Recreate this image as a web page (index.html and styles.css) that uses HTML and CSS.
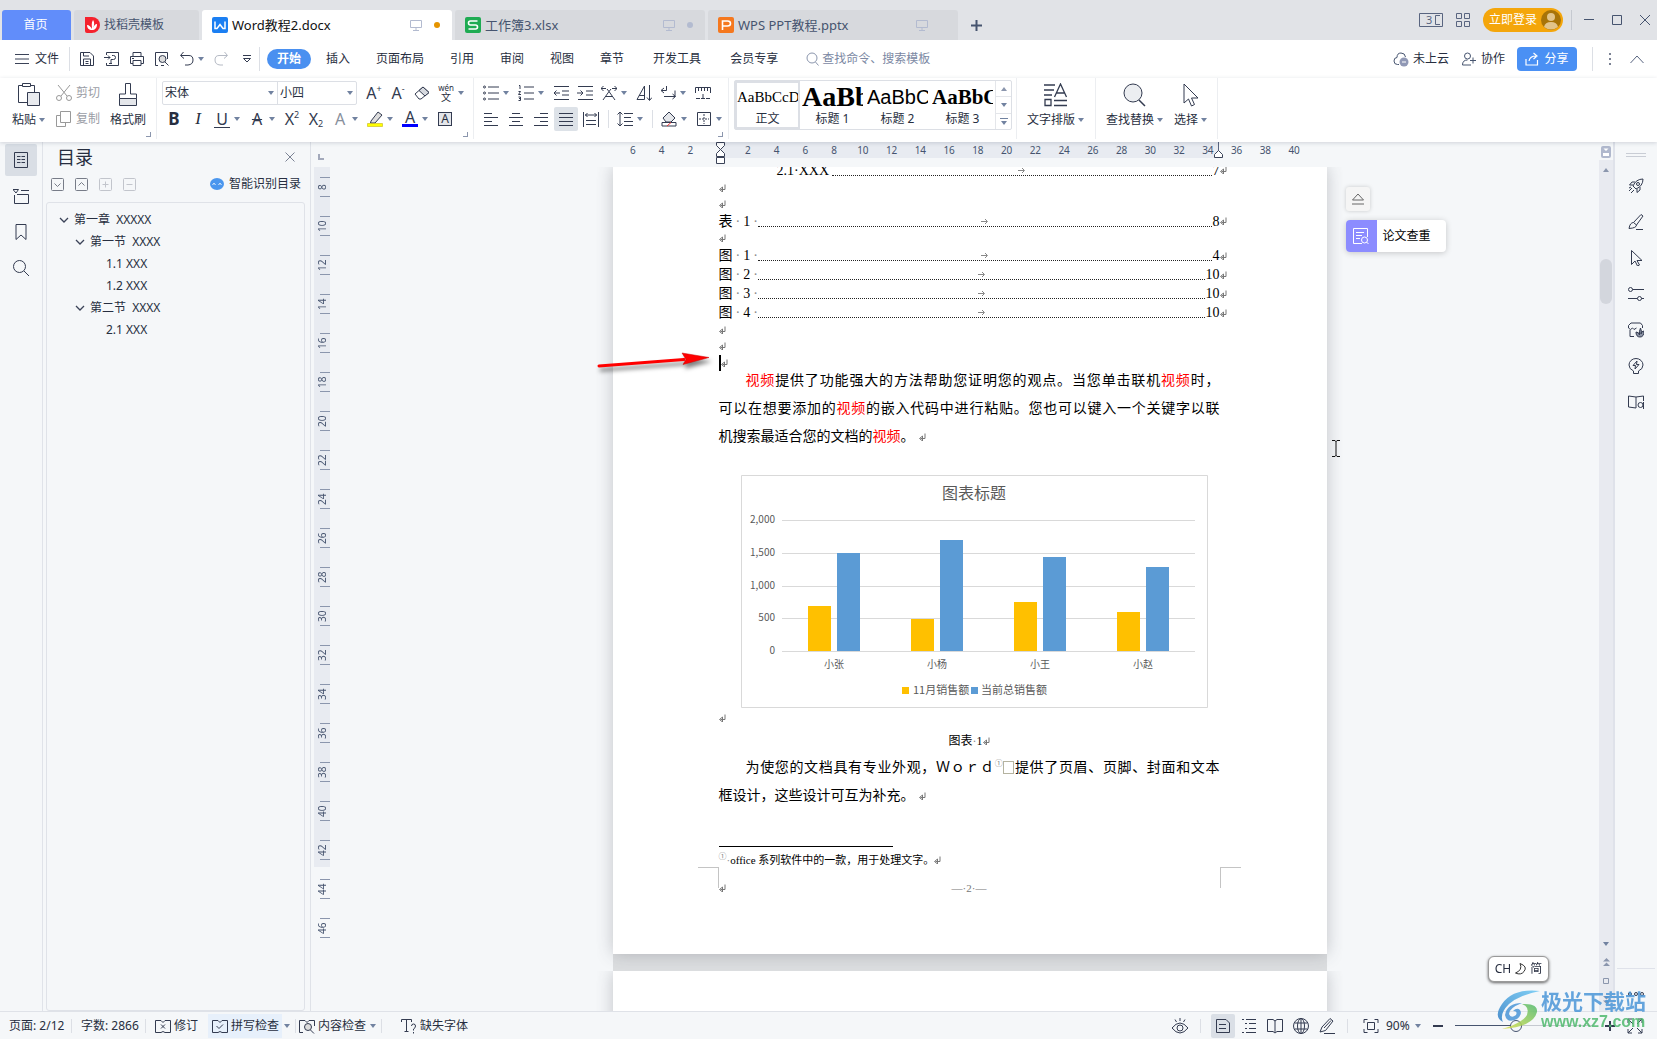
FILE: index.html
```html
<!DOCTYPE html>
<html lang="zh-CN">
<head>
<meta charset="utf-8">
<meta name="viewport" content="width=device-width, initial-scale=1">
<title>Word教程2.docx</title>
<link rel="stylesheet" href="styles.css">
</head>
<body>
<svg class="sprite" aria-hidden="true">
  <symbol id="ret" viewBox="0 0 7 8"><path d="M6 .5v5H1.500M3.500 3v5L.5 5.500z" fill="none" stroke="#777"/></symbol>
  <symbol id="tabarrow" viewBox="0 0 7 7"><path d="M0 3.500h6M4 1l2.500 2.500L4 6" fill="none" stroke="#888"/></symbol>
  <symbol id="screen" viewBox="0 0 12 12"><path d="M.5 1.500h11v7H.5zM6 8.500v3M3 11.500h6" fill="none" stroke="#b3bbd0"/></symbol>
  <symbol id="chev-down" viewBox="0 0 10 6"><path d="M1 1l4 4 4-4" fill="none" stroke="#3b4358" stroke-width="1.300"/></symbol>
</svg>

<header class="titlebar">
  <nav class="doc-tabs">
    <button class="doc-tab home">首页</button>
    <button class="doc-tab template">
      <svg class="i16" viewBox="0 0 16 16"><path d="M1 0h7a8 8 0 0 1 0 16H3a2 2 0 0 1-2-2z" fill="#f5222d"/><path d="M8 13c-3 0-5-2-5-5 2 0 4 2 5 4 0-3-1-6 1-9 2 3 1 6 0 8 1-2 2-4 4-4 0 4-2 6-5 6z" fill="#fff"/></svg>
      <span>找稻壳模板</span>
    </button>
    <button class="doc-tab active">
      <svg class="i16" viewBox="0 0 16 16"><rect width="16" height="16" rx="2" fill="#1b7ff2"/><path d="M3 4.500v7h2l3-4 3 4h2v-7" fill="none" stroke="#fff" stroke-width="1.500"/></svg>
      <span>Word教程2.docx</span>
      <svg class="i12 push"><use href="#screen"/></svg><i class="dot"></i>
    </button>
    <button class="doc-tab">
      <svg class="i16" viewBox="0 0 16 16"><rect width="16" height="16" rx="2" fill="#1eab52"/><path d="M12.500 4h-7Q3.500 4 3.500 6t2 2h5q2 0 2 2t-2 2h-7" fill="none" stroke="#fff" stroke-width="1.600"/></svg>
      <span>工作簿3.xlsx</span>
      <svg class="i12 push"><use href="#screen"/></svg><i class="dot pale"></i>
    </button>
    <button class="doc-tab">
      <svg class="i16" viewBox="0 0 16 16"><rect width="16" height="16" rx="2" fill="#f5781e"/><path d="M4.500 13V4h5q3 0 3 2.500T9.500 9h-5" fill="none" stroke="#fff" stroke-width="1.600"/></svg>
      <span>WPS PPT教程.pptx</span>
      <svg class="i12 push"><use href="#screen"/></svg><i class="dot none"></i>
    </button>
    <button class="new-tab" aria-label="新建"><svg width="11" height="11" viewBox="0 0 11 11"><path d="M5.500 0v11M0 5.500h11" stroke="#46546f" stroke-width="2"/></svg></button>
  </nav>
  <div class="window-tools">
    <svg width="24" height="14" viewBox="0 0 24 14" fill="none" stroke="#596580"><path d="M.5.5h23v13H.5zM21 2.500h-4.500v9H21"/><text x="7" y="11" font-size="11" fill="#596580" stroke="none">3</text></svg>
    <svg width="14" height="14" viewBox="0 0 14 14"><path d="M.5.5h5v5h-5zM8.500.5h5v5h-5zM.5 8.500h5v5h-5zM8.500 8.500h5v5h-5z" fill="none" stroke="#596580"/></svg>
    <button class="login">立即登录<svg width="20" height="20" viewBox="0 0 20 20"><circle cx="10" cy="10" r="10" fill="#a87408"/><circle cx="10" cy="7" r="4" fill="#e2c48a"/><path d="M3 17q1-5 7-5t7 5q-7 5-14 0z" fill="#e2c48a"/></svg></button>
    <i class="vsep"></i>
    <svg class="win" viewBox="0 0 12 12"><path d="M1 5.500h10" stroke="#46546f"/></svg>
    <svg class="win" viewBox="0 0 12 12"><path d="M1.500 1.500h9v9h-9z" fill="none" stroke="#46546f"/></svg>
    <svg class="win" viewBox="0 0 12 12"><path d="M1 1l10 10M11 1L1 11" stroke="#46546f"/></svg>
  </div>
</header>

<div class="menubar">
  <button class="file"><svg width="14" height="10" viewBox="0 0 14 10"><path d="M0 .5h14M0 5h14M0 9.500h14" stroke="#3b4358"/></svg>文件</button>
  <i class="vsep"></i>
  <div class="quick">
    <svg class="i16" viewBox="0 0 16 16"><path d="M1.500 1.500h9.500l3.500 3.500v9.500h-13zM4.500 14.500V8h7v6.500M4.500 1.500V5H10M6.500 10.500h3M6.500 12.500h3"/></svg>
    <svg class="i16" viewBox="0 0 16 16"><path d="M2.500 4V1.500h12v13h-12V12M0 6.500h6M4 4.500l2 2-2 2M7 12V8.500h2.500q2 0 2-2t-2-2H8M5 12.500h3"/></svg>
    <svg class="i16" viewBox="0 0 16 16"><path d="M4 5V1.500h8V5M4 12.500H1.500v-7h13v7H12M4 9.500h8v5H4zM3 7.500h2"/></svg>
    <svg class="i16" viewBox="0 0 16 16"><path d="M4 14.500H1.500v-13h12V8M7 14.500h3"/><circle cx="8.500" cy="8" r="3.500" fill="#ddd"/><path d="M11 11l3.500 3.500"/></svg>
    <span class="undo"><svg class="i16" viewBox="0 0 16 16"><path d="M4.500 1L1.500 4.500l3.500 3M2 4.500h8q4 0 4 4.500t-5 5H6"/></svg><i class="caret"></i></span>
    <svg class="i16 faded" viewBox="0 0 16 16"><path d="M11.500 1l3 3.500L11 7.500M14 4.500H6q-4 0-4 4.500t5 5h3"/></svg>
    <svg width="8" height="8" viewBox="0 0 8 8"><path d="M0 .5h8M.5 3.500h7L4 7z"/></svg>
  </div>
  <i class="vsep"></i>
  <nav class="menu">
    <button class="current">开始</button><button>插入</button><button>页面布局</button><button>引用</button><button>审阅</button><button>视图</button><button>章节</button>
  </nav>
  <nav class="menu wide"><button>开发工具</button><button>会员专享</button></nav>
  <label class="search"><svg width="13" height="14" viewBox="0 0 13 14"><circle cx="6" cy="6" r="5" fill="none" stroke="#8b96ad"/><path d="M9.500 10l3 3.500" stroke="#8b96ad"/></svg><input type="text" placeholder="查找命令、搜索模板" aria-label="查找命令、搜索模板"></label>
  <div class="share-tools">
    <button class="plain"><svg class="i16" viewBox="0 0 16 16"><path d="M6 13.500H4.500Q1 13.500 1 10t3-3.500Q4 2 8 2q4 0 4.500 4" fill="none" stroke="#46546f"/><circle cx="11" cy="11" r="4.500" fill="#9098b5"/><path d="M9 11h4" stroke="#fff"/></svg>未上云</button>
    <button class="plain"><svg class="i16" viewBox="0 0 16 16"><circle cx="6.500" cy="5" r="3" fill="none" stroke="#46546f"/><path d="M10 14H1.500q0-5 5-5M9 9.500h6M12 6.500v6" fill="none" stroke="#46546f"/></svg>协作</button>
    <button class="share"><svg width="14" height="14" viewBox="0 0 14 14"><path d="M1 7v6h11.500V8M4 9q1-5 7-5M8.500 1L12 4 8.500 7" fill="none" stroke="#fff" stroke-width="1.200"/></svg>分享</button>
    <i class="vsep"></i>
    <svg class="more" width="3" height="13" viewBox="0 0 3 13"><path d="M0 0h2v2H0zM0 5h2v2H0zM0 10h2v2H0z" fill="#7b8294"/></svg>
    <svg width="14" height="9" viewBox="0 0 14 9"><path d="M.5 8L7 1l6.500 7" fill="none" stroke="#596580"/></svg>
  </div>
</div>

<section class="ribbon">
  <div class="group clipboard">
    <button class="big"><svg width="22" height="24" viewBox="0 0 22 24"><path d="M4 2.500H.5v17H9M12 2.500h4.500V9M4.500.5h8v3h-8z" fill="none" stroke="#333b50"/><path d="M9.500 9.500h12v13h-12z" fill="#e8eaee" stroke="#333b50"/></svg><span>粘贴<i class="caret"></i></span></button>
    <div class="stack">
      <button class="small"><svg class="i16" viewBox="0 0 16 16"><path d="M2 0l9 11M14 0L5 11" stroke="#999" fill="none"/><circle cx="3" cy="13" r="2.500" stroke="#999" fill="none"/><circle cx="13" cy="13" r="2.500" stroke="#999" fill="none"/></svg>剪切</button>
      <button class="small"><svg class="i16" viewBox="0 0 16 16"><path d="M4.500.5h10v11h-10zM4.500 4.500h-4v11h9v-4" fill="none" stroke="#999"/></svg>复制</button>
    </div>
    <button class="big painter"><svg width="20" height="24" viewBox="0 0 20 24"><path d="M7.500 11V.5h5V11h6v4.500H1.500V11z" fill="#fff" stroke="#333b50"/><path d="M1.500 15.500h17v7h-17z" fill="#e4e6ea" stroke="#333b50"/></svg><span>格式刷</span></button>
    <i class="launcher"></i>
  </div>
  <div class="group font-group">
    <div class="row first">
      <div class="combos">
        <span class="combo family"><select aria-label="字体"><option>宋体</option></select><i class="caret"></i></span>
        <span class="combo size"><select aria-label="字号"><option>小四</option></select><i class="caret"></i></span>
      </div>
      <button class="tool letter">A<sup>+</sup></button>
      <button class="tool letter">A<sup>-</sup></button>
      <button class="tool" aria-label="清除格式"><svg class="i16" viewBox="0 0 16 16"><path d="M1 9l8-7 6 5.500-8 6.500H5z" fill="#fff" stroke="#333b50"/><path d="M5 5.500l6 5.500 4-3.500L9 2z" fill="#d6d9df" stroke="#333b50"/></svg></button>
      <button class="tool drop"><span class="pinyin"><small>wén</small><span>文</span></span><i class="caret"></i></button>
    </div>
    <div class="row">
      <button class="tool bold">B</button><button class="tool italic">I</button>
      <button class="tool drop"><span class="under">U</span><i class="caret"></i></button>
      <button class="tool drop"><span class="strike">A</span><i class="caret"></i></button>
      <button class="tool script">X<sup>2</sup></button><button class="tool script">X<sub>2</sub></button>
      <button class="tool drop"><span class="outline">A</span><i class="caret"></i></button>
      <button class="tool drop" aria-label="突出显示"><svg class="i16" viewBox="0 0 16 16"><path d="M4 10l7-9 4 3-7 8H3.500z" fill="#ddd" stroke="#333b50"/><path d="M.5 12.500h15v3H.5z" fill="#ff0" stroke="#bba800" stroke-width=".5"/></svg><i class="caret"></i></button>
      <button class="tool drop"><span class="colored">A</span><i class="caret"></i></button>
      <button class="tool"><span class="boxed">A</span></button>
    </div>
    <i class="launcher"></i>
  </div>
  <div class="group para-group">
    <div class="row first">
      <button class="tool drop" aria-label="项目符号"><svg class="i16" viewBox="0 0 16 16"><path d="M5 2h11M5 8h11M5 14h11"/><circle cx="1.500" cy="2" r="1"/><circle cx="1.500" cy="8" r="1"/><circle cx="1.500" cy="14" r="1"/></svg><i class="caret"></i></button>
      <button class="tool drop" aria-label="编号"><svg class="i16" viewBox="0 0 16 16"><path d="M6 2h10M6 8h10M6 14h10M1 .5h1V4M.5 6.500h2L.5 9.500h2.500M.5 12h2v3.500h-2M1 13.500h1"/></svg><i class="caret"></i></button>
      <button class="tool" aria-label="减少缩进"><svg class="i16" viewBox="0 0 16 16"><path d="M1 1.500h15M9 6h7M9 10h7M1 14.500h15M7 8H1M3.500 5.500L1 8l2.500 2.500"/></svg></button>
      <button class="tool" aria-label="增加缩进"><svg class="i16" viewBox="0 0 16 16"><path d="M1 1.500h15M9 6h7M9 10h7M1 14.500h15M0 8h6M3.500 5.500L6 8l-2.500 2.500"/></svg></button>
      <button class="tool drop" aria-label="中文版式"><svg class="i16" viewBox="0 0 16 16"><path d="M0 3.500h5M11 3.500h5M2.500 1L0 3.500 2.500 6M13.500 1L16 3.500 13.500 6M2 15L8 6.500 14 15M4.500 11.500h7M6 4l2 2.500L10 4"/></svg><i class="caret"></i></button>
      <button class="tool" aria-label="排序"><svg class="i16" viewBox="0 0 16 16"><path d="M13.500 0v15M11 12.500l2.500 3 2.500-3M1 14.500L8.500 1v13.500zM3 10.500h5"/></svg></button>
      <button class="tool drop" aria-label="显示段落标记"><svg class="i16" viewBox="0 0 16 16"><path d="M6.500 1v4.500h-5M4 3L1 5.500 4 8M15 5.500v6H4M12.500 9l3 2.500-3 2.500"/></svg><i class="caret"></i></button>
      <button class="tool" aria-label="制表位"><svg class="i16" viewBox="0 0 16 16"><path d="M.5 8V2.500h15V8M3.500 3v3M6.500 3v3M9.500 3v3M12.500 3v3M1 13.500h4M11 13.500h4M8 9v5M6 13.500h4"/></svg></button>
    </div>
    <div class="row gap">
      <button class="tool" aria-label="左对齐"><svg class="i16" viewBox="0 0 16 16"><path d="M1 2.500h8M1 6.500h14M1 10.500h8M1 14.500h14"/></svg></button>
      <button class="tool" aria-label="居中"><svg class="i16" viewBox="0 0 16 16"><path d="M4 2.500h8M1 6.500h14M4 10.500h8M1 14.500h14"/></svg></button>
      <button class="tool" aria-label="右对齐"><svg class="i16" viewBox="0 0 16 16"><path d="M7 2.500h8M1 6.500h14M7 10.500h8M1 14.500h14"/></svg></button>
      <button class="tool on" aria-label="两端对齐"><svg class="i16" viewBox="0 0 16 16"><path d="M1 2.500h14M1 6.500h14M1 10.500h14M1 14.500h14"/></svg></button>
      <button class="tool" aria-label="分散对齐"><svg class="i16" viewBox="0 0 16 16"><path d="M.5 1v15M15.500 1v15M2 4h12M4.500 2L2.500 4l2 2M11.500 2l2 2-2 2M3 9.500h10M3 13.500h10"/></svg></button>
      <i class="vsep"></i>
      <button class="tool drop" aria-label="行距"><svg class="i16" viewBox="0 0 16 16"><path d="M3 1v14M.5 3.500L3 1l2.500 2.500M.5 12.500L3 15l2.500-2.500M7 2.500h9M7 6.500h7M7 10.500h9M7 14.500h9"/></svg><i class="caret"></i></button>
      <i class="vsep"></i>
      <button class="tool drop" aria-label="底纹"><svg class="i16" viewBox="0 0 16 16"><path d="M2 7l6-6 6 6-4 4H5z" fill="#e4e6ea"/><path d="M1 11.500h14v3.500H1z"/><path d="M6 15l4-3.500" stroke="#e33"/></svg><i class="caret"></i></button>
      <button class="tool drop" aria-label="边框"><svg class="i16" viewBox="0 0 16 16"><path d="M1.500 1.500h13v13h-13z"/><path d="M8 3v10M3 8h10" stroke-dasharray="2 1"/></svg><i class="caret"></i></button>
    </div>
    <i class="launcher"></i>
  </div>
  <div class="group styles-group">
    <div class="gallery">
      <button class="style chosen"><span class="sample normal">AaBbCcDd</span><span>正文</span></button>
      <button class="style"><span class="sample h1">AaBb</span><span>标题 1</span></button>
      <button class="style"><span class="sample h2">AaBbC</span><span>标题 2</span></button>
      <button class="style"><span class="sample h3">AaBbC</span><span>标题 3</span></button>
      <div class="spin"><button aria-label="上一行"><i class="caret up"></i></button><button aria-label="下一行"><i class="caret"></i></button><button aria-label="更多样式"><svg width="8" height="8" viewBox="0 0 8 8"><path d="M0 1.500h8" stroke="#7182a0"/><path d="M1 4h6L4 8z" fill="#7182a0"/></svg></button></div>
    </div>
  </div>
  <div class="group typeset">
    <button class="big"><svg width="24" height="24" viewBox="0 0 24 24" fill="none" stroke="#333b50" stroke-width="1.300"><path d="M0 2h11M0 7h10M0 12h8M10.500 14L16.500 1l6 13M12.500 10h8M1 16.500h6v6H1zM10 17.500h13M10 22.500h13"/></svg><span>文字排版<i class="caret"></i></span></button>
  </div>
  <div class="group edit">
    <button class="big"><svg width="24" height="24" viewBox="0 0 24 24"><circle cx="10" cy="10" r="9" fill="#eceef1" stroke="#333b50"/><path d="M16 17l6 6" stroke="#333b50" stroke-width="1.500"/></svg><span>查找替换<i class="caret"></i></span></button>
    <button class="big"><svg width="24" height="24" viewBox="0 0 24 24"><path d="M5 1v19l4.500-4 3 7 3-1.500-3-6.500h6.500z" fill="#fff" stroke="#333b50"/></svg><span>选择<i class="caret"></i></span></button>
  </div>
</section>

<main class="workspace">
  <nav class="rail left">
    <button class="on" aria-label="目录"><svg class="i16" viewBox="0 0 16 16"><path d="M1.500.5h13v15h-13zM4 4.500h3.500M8.500 4.500H12M4 7.500h3.500M8.500 7.500H12M4 10.500h3.500M8.500 10.500H12"/></svg></button>
    <button aria-label="章节"><svg class="i16" viewBox="0 0 16 16"><path d="M0 1.500h5.500L3 5zM8 2.500h8M1.500 7v8.500h14v-9H4"/></svg></button>
    <button aria-label="书签"><svg class="i16" viewBox="0 0 16 16"><path d="M3 .5h10v15L8 11l-5 4.500z"/></svg></button>
    <button aria-label="查找"><svg class="i16" viewBox="0 0 16 16"><circle cx="6.500" cy="6.500" r="6"/><path d="M11 11l5 5"/></svg></button>
  </nav>
  <aside class="outline-panel">
    <div class="panel-head"><h2>目录</h2><button aria-label="关闭"><svg width="10" height="10" viewBox="0 0 10 10"><path d="M.5.5l9 9M9.500.5l-9 9" stroke="#7b8294"/></svg></button></div>
    <div class="panel-tools">
      <svg class="sq" viewBox="0 0 13 13"><rect x=".5" y=".5" width="12" height="12" rx="1"/><path d="M3.500 5.500l3 3 3-3"/></svg>
      <svg class="sq" viewBox="0 0 13 13"><rect x=".5" y=".5" width="12" height="12" rx="1"/><path d="M3.500 7.500l3-3 3 3"/></svg>
      <svg class="sq off" viewBox="0 0 13 13"><rect x=".5" y=".5" width="12" height="12" rx="1"/><path d="M3.500 6.500h6M6.500 3.500v6"/></svg>
      <svg class="sq off" viewBox="0 0 13 13"><rect x=".5" y=".5" width="12" height="12" rx="1"/><path d="M3.500 6.500h6"/></svg>
      <button class="smart"><svg width="14" height="12" viewBox="0 0 14 12"><ellipse cx="7" cy="6" rx="7" ry="6" fill="#4a96ee"/><path d="M2.500 6.500q1.500-2 3 0M8.500 6.500q1.500-2 3 0" fill="none" stroke="#fff"/></svg>智能识别目录</button>
    </div>
    <ul class="tree">
      <li class="l1"><svg class="tw"><use href="#chev-down"/></svg>第一章&nbsp; XXXXX</li>
      <li class="l2"><svg class="tw"><use href="#chev-down"/></svg>第一节&nbsp; XXXX</li>
      <li class="l3">1.1 XXX</li>
      <li class="l3">1.2 XXX</li>
      <li class="l2"><svg class="tw"><use href="#chev-down"/></svg>第二节&nbsp; XXXX</li>
      <li class="l3">2.1 XXX</li>
    </ul>
  </aside>

  <section class="editor">
    <div class="hruler-strip">
      <div class="corner"><svg width="6" height="6" viewBox="0 0 6 6"><path d="M1 0v5h5" fill="none" stroke="#a3a9bb" stroke-width="2"/></svg></div>
      <div class="hruler">
        <div class="hnums"><span>6</span><span>4</span><span>2</span><span></span><span>2</span><span>4</span><span>6</span><span>8</span><span>10</span><span>12</span><span>14</span><span>16</span><span>18</span><span>20</span><span>22</span><span>24</span><span>26</span><span>28</span><span>30</span><span>32</span><span>34</span><span>36</span><span>38</span><span>40</span></div>
        <svg class="indent-left" width="9" height="22" viewBox="0 0 9 22"><path d="M.5.500h8v3l-4 4-4-4zM.5 14.500v-3l4-4 4 4v3zM.5 15.500h8v6h-8z" fill="#fff" stroke="#3b4358"/></svg>
        <svg class="indent-right" width="9" height="16" viewBox="0 0 9 16"><path d="M4.500 0v9" stroke="#596580"/><path d="M.5 15.500v-3l4-4 4 4v3z" fill="#fff" stroke="#3b4358"/></svg>
      </div>
    </div>
    <div class="canvas">
      <div class="vcol"><div class="vruler"><span>8</span><span>10</span><span>12</span><span>14</span><span>16</span><span>18</span><span>20</span><span>22</span><span>24</span><span>26</span><span>28</span><span>30</span><span>32</span><span>34</span><span>36</span><span>38</span><span>40</span><span>42</span><span>44</span><span>46</span></div></div>
      <div class="pages">
        <article class="page">
          <div class="toc sub"><span class="lab">2.1·XXX</span><i class="leader"><svg><use href="#tabarrow"/></svg></i><b>7</b><svg class="ret"><use href="#ret"/></svg></div>
          <div class="blank"><svg class="ret"><use href="#ret"/></svg></div>
          <div class="blank"><svg class="ret"><use href="#ret"/></svg></div>
          <div class="toc tbl"><span class="lab">表<i>·</i>1<i>·</i></span><i class="leader"><svg><use href="#tabarrow"/></svg></i><b>8</b><svg class="ret"><use href="#ret"/></svg></div>
          <div class="blank"><svg class="ret"><use href="#ret"/></svg></div>
          <div class="toc"><span class="lab">图<i>·</i>1<i>·</i></span><i class="leader"><svg><use href="#tabarrow"/></svg></i><b>4</b><svg class="ret"><use href="#ret"/></svg></div>
          <div class="toc"><span class="lab">图<i>·</i>2<i>·</i></span><i class="leader"><svg><use href="#tabarrow"/></svg></i><b>10</b><svg class="ret"><use href="#ret"/></svg></div>
          <div class="toc"><span class="lab">图<i>·</i>3<i>·</i></span><i class="leader"><svg><use href="#tabarrow"/></svg></i><b>10</b><svg class="ret"><use href="#ret"/></svg></div>
          <div class="toc"><span class="lab">图<i>·</i>4<i>·</i></span><i class="leader"><svg><use href="#tabarrow"/></svg></i><b>10</b><svg class="ret"><use href="#ret"/></svg></div>
          <div class="blank"><svg class="ret"><use href="#ret"/></svg></div>
          <div class="blank"><svg class="ret"><use href="#ret"/></svg></div>
          <div class="blank caret-line"><svg class="ret"><use href="#ret"/></svg></div>
          <p class="text"><span class="line indent"><em>视频</em>提供了功能强大的方法帮助您证明您的观点。当您单击联机<em>视频</em>时，</span><span class="line">可以在想要添加的<em>视频</em>的嵌入代码中进行粘贴。您也可以键入一个关键字以联</span><span class="line last">机搜索最适合您的文档的<em>视频</em>。<svg class="ret"><use href="#ret"/></svg></span></p>
          <svg class="chart" viewBox="0 0 467 233" role="img" aria-label="图表标题">
            <path class="frame" d="M.5.5h466v232H.5z"/>
            <text class="title" x="233" y="24">图表标题</text>
            <path class="grid" d="M41 45.500h413M41 78.500h413M41 111.500h413M41 143.500h413M41 176.500h413"/>
            <g class="axis"><text x="34" y="48">2,000</text><text x="34" y="81">1,500</text><text x="34" y="114">1,000</text><text x="34" y="146">500</text><text x="34" y="179">0</text></g>
            <g class="gold"><path d="M67 131h23v45H67zM170 144h23v32h-23zM273 127h23v49h-23zM376 137h23v39h-23zM161 212h7v7h-7z"/></g>
            <g class="blue"><path d="M96 78h23v98H96zM199 65h23v111h-23zM302 82h23v94h-23zM405 92h23v84h-23zM230 212h7v7h-7z"/></g>
            <g class="cats"><text x="93" y="193">小张</text><text x="196" y="193">小杨</text><text x="299" y="193">小王</text><text x="402" y="193">小赵</text></g>
            <g class="legend"><text x="172" y="219">11月销售额</text><text x="240" y="219">当前总销售额</text></g>
          </svg>
          <div class="blank tall"><svg class="ret"><use href="#ret"/></svg></div>
          <div class="caption">图表<i>·</i>1<svg class="ret"><use href="#ret"/></svg></div>
          <p class="text"><span class="line indent">为使您的文档具有专业外观，Ｗｏｒｄ<sup>①</sup><i class="box"></i>提供了页眉、页脚、封面和文本</span><span class="line last">框设计，这些设计可互为补充。<svg class="ret"><use href="#ret"/></svg></span></p>
          <footer class="footnote"><sup>①</sup><i>·</i>office 系列软件中的一款，用于处理文字。<svg class="ret"><use href="#ret"/></svg></footer>
          <div class="page-foot"><i class="mark ml"></i><svg class="ret"><use href="#ret"/></svg><span>—·2·—</span><i class="mark mr"></i></div>
        </article>
        <article class="page next"></article>
        <svg class="red-arrow" width="118" height="24" viewBox="0 0 118 24"><path d="M3 15L88 8.500" stroke="#f00" stroke-width="3" stroke-linecap="round"/><path d="M86 2l27 4.500-26 7 3-5z" fill="#f00" stroke="#c00" stroke-width=".5"/></svg>
        <div class="side-card">
          <button class="eject" aria-label="收起"><svg width="12" height="12" viewBox="0 0 12 12"><path d="M.5 7L6 1l5.500 6zM0 11h12" fill="none" stroke="#666"/></svg></button>
          <button class="check"><span class="badge"><svg class="i16" viewBox="0 0 16 16"><path d="M14.500 9V.5H.5v15H9M3 4.500h8M3 7.500h6M3 10.500h4M13.500 14l2 2" fill="none" stroke="#fff"/><circle cx="11.500" cy="12" r="3" fill="none" stroke="#fff"/></svg></span><span>论文查重</span></button>
        </div>
        <svg class="ibeam" width="8" height="17" viewBox="0 0 8 17"><path d="M0 .5h3l1 1 1-1h3M4 1v15M0 16.500h3l1-1 1 1h3" fill="none" stroke="#111"/></svg>
      </div>
    </div>
  </section>

  <div class="scrollbar">
    <svg class="ruler-toggle" width="10" height="12" viewBox="0 0 10 12"><rect width="10" height="12" rx="2" fill="#b0b8cd"/><path d="M2.500 2.500h5L5 5zM2 7h6v3H2z" fill="#fff"/></svg>
    <div class="track"><i class="caret up"></i><i class="thumb"></i>
      <div class="steps"><i class="caret"></i><svg width="7" height="8" viewBox="0 0 7 8"><path d="M3.500 0L7 3.500H0zM3.500 4.500L7 8H0z" fill="#8b96ad"/></svg><svg width="6" height="6" viewBox="0 0 6 6"><path d="M.5.5h5v5h-5z" fill="none" stroke="#8b96ad"/></svg><svg width="7" height="8" viewBox="0 0 7 8"><path d="M0 0h7L3.500 3.500zM0 4.500h7L3.500 8z" fill="#8b96ad"/></svg></div>
    </div>
  </div>

  <nav class="rail right">
    <i class="grip"></i>
    <button aria-label="助手"><svg class="i16" viewBox="0 0 16 16"><path d="M5 8q3-7 10-7 0 7-7 10zM5 7H1.500L4 4h3M9 11v3.500L12 12V9M1 10l2-1M1 13l3-3M3 15l3-3"/><circle cx="10" cy="6" r="1.500"/></svg></button>
    <button aria-label="样式"><svg class="i16" viewBox="0 0 16 16"><path d="M5.500 8.500L13 .5l2 1.500-6.500 9M5.500 8.500l3 2.500q0 3-7.500 3.500 1-6 4.500-6zM8 15.500h7"/></svg></button>
    <button aria-label="选择"><svg class="i16" viewBox="0 0 16 16"><path d="M3.500.5v14L7 11l2.500 5 2-1L9 10.500h5z"/></svg></button>
    <button aria-label="属性"><svg class="i16" viewBox="0 0 16 16"><path d="M4.500 3.500H16M0 12.500h9.500M13.500 12.500H16"/><circle cx="2.500" cy="3.500" r="2"/><circle cx="11.500" cy="12.500" r="2"/></svg></button>
    <button aria-label="素材"><svg class="i16" viewBox="0 0 16 16"><path d="M14.500 6V3.500L12.500 1H3L.5 3.500V6q2 3 4 0 1 3 4 0M2 8v6.500h4"/><path d="M8 10q3 0 3.500 3Q11 9 12.500 6q1.500 3 .5 6 .5-3 3-3 0 6-4 6t-4-5z" fill="#8b93a5"/></svg></button>
    <button aria-label="推荐"><svg class="i16" viewBox="0 0 16 16"><path d="M5.500 13Q1 11 1 7a7 6.500 0 0 1 14 0q0 4-4.500 6v2.500h-5zM9 3L5 7.500h2.500L7 11l4-4.500H8.500z"/></svg></button>
    <button aria-label="查阅"><svg class="i16" viewBox="0 0 16 16"><path d="M8 3v11M8 14L.5 13V2L8 3l7.500-1v5M15.500 8v7"/><circle cx="12.500" cy="11" r="2.500"/></svg></button>
    <i class="rail-line"></i>
    <button class="dots" aria-label="更多"><svg width="16" height="4" viewBox="0 0 16 4"><circle cx="2" cy="2" r="1.500"/><circle cx="8" cy="2" r="1.500"/><circle cx="14" cy="2" r="1.500"/></svg></button>
  </nav>
</main>

<footer class="status">
  <span class="page-no">页面: 2/12</span><i class="vsep"></i>
  <span class="words">字数: 2866</span><i class="vsep"></i>
  <button class="st"><svg class="i16" viewBox="0 0 16 16"><path d="M6 14.500H.5v-12H6M10 2.500h5.500v12H10M6 2.500l2 2 2-2M6 14.500l2-1 2 1M6 6.500l4 4M10 6.500l-4 4"/></svg>修订</button>
  <button class="st spell"><svg class="i16" viewBox="0 0 16 16"><path d="M6 14.500H.5v-12H6M10 2.500h5.500v12H10M6 2.500l2 2 2-2M6 14.500l2-1 2 1M4.500 8l2.500 2.500 4-4"/></svg>拼写检查</button><i class="caret"></i><i class="vsep"></i>
  <button class="st"><svg class="i16" viewBox="0 0 16 16"><path d="M4 14.500H.5v-12H6l2 2 2-2h5.500V8"/><circle cx="9" cy="9" r="3.500" fill="#ddd"/><path d="M11.500 12l3.500 3.500"/></svg>内容检查</button><i class="caret"></i><i class="vsep"></i>
  <button class="st missing"><svg class="i16" viewBox="0 0 16 16"><path d="M.5 4V1.500h10V4M5.500 1.500v12M3.500 13.500h4M10.500 8q0-2 2-2t2 2-2 3v1.500M12.500 14v1.500"/></svg>缺失字体</button>
  <div class="views">
    <button class="v" aria-label="护眼"><svg class="i16" viewBox="0 0 16 16"><path d="M0 10q4-5 8-5t8 5q-4 5-8 5t-8-5zM8 0v3M3 1.500L4.500 4M13 1.500L11.500 4"/><circle cx="8" cy="10" r="3"/></svg></button>
    <i class="vsep"></i>
    <button class="v on" aria-label="页面视图"><svg class="i16" viewBox="0 0 16 16"><path d="M1.500 1.500H11L14.500 5v9.500h-13zM4 6.500h7M4 10.500h7"/></svg></button>
    <button class="v" aria-label="大纲"><svg class="i16" viewBox="0 0 16 16"><path d="M1 1.500h2M5 1.500h10M4 5.500h2M8 5.500h7M4 10.500h2M8 10.500h7M1 14.500h2M5 14.500h10"/></svg></button>
    <button class="v" aria-label="阅读"><svg class="i16" viewBox="0 0 16 16"><path d="M8 3v11M.5 1.500H6l2 1.500 2-1.500h5.500v12H10L8 15l-2-1.500H.5z"/></svg></button>
    <button class="v" aria-label="Web版式"><svg class="i16" viewBox="0 0 16 16"><circle cx="8" cy="8" r="7.500"/><ellipse cx="8" cy="8" rx="3.500" ry="7.500"/><path d="M1.500 5h13M1.500 11h13M8 .5v15"/></svg></button>
    <button class="v" aria-label="写作"><svg class="i16" viewBox="0 0 16 16"><path d="M3 9l8-8.500 3 2.500-7.500 9.500L1 14zM5 10l7-7.500M5 15.500h11"/></svg></button>
    <i class="vsep"></i>
    <svg class="i16 fit" viewBox="0 0 16 16"><path d="M1 5V1.500h3.500M11.500 1.500H15V5M15 11v3.500h-3.500M4.500 14.500H1V11M4.500 4.500h7v7h-7z"/></svg>
    <span class="zoom">90%</span><i class="caret"></i>
    <button class="step" aria-label="缩小"><svg width="10" height="10" viewBox="0 0 10 10"><path d="M0 5h10" stroke-width="2"/></svg></button>
    <input class="slider" type="range" min="0" max="100" value="44" aria-label="显示比例">
    <button class="step" aria-label="放大"><svg width="10" height="10" viewBox="0 0 10 10"><path d="M0 5h10M5 0v10" stroke-width="2"/></svg></button>
    <svg class="i16 full" viewBox="0 0 16 16"><path d="M1 5V1h4M11 1h4v4M15 11v4h-4M5 15H1v-4M1 1l5 5M15 1l-5 5M15 15l-5-5M1 15l5-5"/></svg>
  </div>
</footer>

<div class="ime"><span>CH</span><svg width="11" height="12" viewBox="0 0 11 12"><path d="M5 .5q8 3 4 8-3 4-8.500 1.500Q8 7 5 .500z" fill="none" stroke="#333"/></svg><span>简</span></div>
<div class="watermark">
  <svg width="44" height="40" viewBox="0 0 44 40"><defs><linearGradient id="wb" x1="0" y1="1" x2="1" y2="0"><stop offset="0" stop-color="#2f7fc6"/><stop offset="1" stop-color="#6cc8f5"/></linearGradient><linearGradient id="wg" x1="1" y1="0" x2="0" y2="1"><stop offset="0" stop-color="#4fb96e"/><stop offset="1" stop-color="#dfe04a"/></linearGradient></defs><path d="M43 1Q16-2 5 14-4 27 6 32 2 24 12 14 22 5 43 1z" fill="url(#wb)"/><path d="M25 14q16-1 15 8Q36 37 5 39q20-6 25-14 3-8-5-11z" fill="url(#wg)"/><path d="M25 13q-15 0-17 12 2 9 12 4 6-5 3-9-3-3-7 1 5 0 3 4-5 4-7-1 0-6 13-11z" fill="#4b96d8"/></svg>
  <div><strong>极光下载站</strong><span>www.xz7.com</span></div>
</div>
</body>
</html>
```
FILE: styles.css
```css
* { box-sizing: border-box; }
html, body { height: 100%; }
body {
  margin: 0;
  display: flex;
  flex-direction: column;
  overflow: hidden;
  background: #f5f7f9;
  color: #272e40;
  font: 12px/16px "Noto Sans", "Noto Sans CJK SC", sans-serif;
}
button, input, select { font: inherit; color: inherit; }
button { border: 0; padding: 0; background: none; white-space: nowrap; }
svg { display: block; flex: none; }
i { font-style: normal; flex: none; }
.sprite { position: absolute; width: 0; height: 0; }
.i16 { width: 16px; height: 16px; }
.i12 { width: 12px; height: 12px; }
.push { margin-left: auto; }
.vsep { width: 1px; background: #dcdfe5; }
.caret { width: 0; height: 0; border: 3px solid transparent; border-top: 4px solid #7182a0; border-bottom: 0; }
.caret.up { border-top: 0; border-bottom: 4px solid #8b96ad; }

/* title bar */
.titlebar { display: flex; justify-content: space-between; height: 40px; background: #e1e3e7; flex: none; }
.doc-tabs { display: flex; align-items: flex-end; gap: 3px; padding-left: 2px; }
.doc-tab { display: flex; align-items: center; gap: 4px; width: 250px; height: 30px; padding: 0 12px 0 10px; background: #d7d9dd; border-radius: 3px 3px 0 0; color: #46546f; font-size: 13px; }
.doc-tab.home { width: 69px; justify-content: center; background: #618dfa; color: #fff; font-size: 12px; }
.doc-tab.template { width: 125px; font-size: 12px; }
.doc-tab.active { background: #fff; color: #111; }
.dot { width: 6px; height: 6px; margin-left: 8px; border-radius: 3px; background: #e59400; }
.dot.pale { background: #b3bbd0; }
.dot.none { background: none; }
.new-tab { width: 30px; height: 30px; display: flex; align-items: center; justify-content: center; }
.window-tools { display: flex; align-items: center; gap: 13px; padding-right: 6px; }
.window-tools .vsep { height: 20px; background: #c5c9d0; margin: 0 -5px; }
.login { display: flex; align-items: center; gap: 4px; height: 24px; padding: 0 2px 0 6px; border-radius: 12px; background: #f4a60b; color: #fff; }
.win { width: 12px; height: 12px; margin: 0 0 0 3px; }

/* menu bar */
.menubar { display: flex; align-items: center; height: 38px; background: #fff; flex: none; }
.menubar > .vsep { height: 24px; }
.file { display: flex; align-items: center; gap: 6px; padding: 0 10px 0 15px; }
.quick { display: flex; align-items: center; gap: 9px; padding: 0 8px 0 9px; fill: none; stroke: #333b50; }
.quick .faded { stroke: #b5bac4; }
.quick svg:last-child { margin-left: 5px; }
.undo { display: flex; align-items: center; gap: 3px; }
.quick .undo svg { margin-left: 0; }
.menu { display: flex; align-items: center; gap: 26px; padding-left: 7px; }
.menu.wide { gap: 29px; padding-left: 29px; }
.menu .current { height: 20px; width: 44px; margin-right: -11px; border-radius: 10px; background: #4a90f0; color: #fff; font-weight: bold; }
.search { display: flex; align-items: center; gap: 3px; padding-left: 28px; }
.search input { width: 120px; border: 0; padding: 0; outline: 0; background: none; }
.search input::placeholder { color: #7b88a3; opacity: 1; }
.share-tools { display: flex; align-items: center; margin-left: auto; padding-right: 13px; }
.plain { display: flex; align-items: center; gap: 4px; margin-right: 12px; }
.share { display: flex; align-items: center; justify-content: center; gap: 5px; width: 60px; height: 24px; border-radius: 4px; background: #4a90f4; color: #fff; }
.share-tools .vsep { height: 24px; margin-left: 15px; }
.more { margin: 0 18px 0 16px; }

/* ribbon */
.ribbon { display: flex; height: 64px; background: #fff; flex: none; box-shadow: 0 1px 4px rgba(40, 50, 80, .18); position: relative; z-index: 2; }
.group { position: relative; height: 61px; border-right: 1px solid #eceef1; flex: none; }
.launcher { position: absolute; right: 5px; bottom: 2px; width: 5px; height: 5px; border: solid #8b96ad; border-width: 0 1px 1px 0; }
.big { display: flex; flex-direction: column; align-items: center; gap: 5px; padding-top: 5px; }
.big > svg { height: 24px; }
.big span { display: flex; align-items: center; gap: 3px; }
.clipboard { display: flex; width: 157px; padding-left: 12px; }
.stack { display: flex; flex-direction: column; gap: 6px; padding: 5px 0 0 11px; }
.small { display: flex; align-items: center; gap: 4px; height: 20px; color: #9a9da5; }
.painter { margin-left: 10px; }
.font-group { width: 317px; padding-left: 5px; }
.para-group { width: 255px; padding-left: 5px; }
.row { display: flex; align-items: center; height: 24px; margin-top: 2px; }
.row.first { margin-top: 3px; }
.row.gap { gap: 1px; }
.row.gap .drop { width: 34px; }
.row .vsep { height: 18px; margin: 0 3px 0 4px; }
.tool { display: flex; align-items: center; justify-content: center; width: 24px; height: 24px; border-radius: 2px; }
.tool.drop { width: 35px; justify-content: flex-start; padding-left: 4px; gap: 4px; }
.tool svg { fill: none; stroke: #333b50; }
.tool.on { background: #dde2e8; }
.combos { display: flex; width: 195px; height: 24px; margin-right: 5px; border: 1px solid #dcdfe5; border-radius: 2px; }
.combo { display: flex; align-items: center; padding-right: 3px; }
.combo.family { width: 115px; border-right: 1px solid #dcdfe5; }
.combo.size { flex: 1; }
.combo select { flex: 1; min-width: 0; height: 22px; border: 0; padding: 0 2px; background: none; appearance: none; outline: 0; }
.letter, .script, .under, .strike, .outline, .colored { font-size: 16px; color: #333b50; }
.tool sup, .tool sub { font-size: 9px; line-height: 9px; }
.tool sup { align-self: flex-start; padding-top: 3px; }
.tool sub { align-self: flex-end; padding-bottom: 3px; }
.pinyin { display: flex; flex-direction: column; align-items: center; width: 16px; font-size: 10px; line-height: 11px; }
.pinyin small { font-size: 8px; line-height: 8px; }
.bold { font: bold 17px/24px "Noto Sans", sans-serif; }
.italic { font: italic 17px/24px "Liberation Serif", serif; }
.under, .strike, .outline, .colored { width: 16px; text-align: center; line-height: 16px; }
.under { border-bottom: 1px solid #333b50; }
.strike { text-decoration: line-through 1px; }
.outline { color: #888f9c; }
.colored { height: 16px; line-height: 13px; border-bottom: 3px solid #00f; }
.boxed { width: 14px; height: 14px; border: 1px solid #333b50; background: #e4e6ea; line-height: 12px; text-align: center; }
.styles-group { width: 288px; padding: 2px 0 0 5px; }
.gallery { display: flex; height: 50px; width: 278px; border: 1px solid #dcdfe5; border-radius: 2px; }
.style { display: flex; flex-direction: column; align-items: center; justify-content: flex-end; width: 65px; padding: 0 2px 2px; overflow: hidden; }
.style.chosen { outline: 2px solid #dcdfe5; outline-offset: -2px; }
.sample { align-self: stretch; text-align: left; overflow: hidden; color: #000; height: 28px; line-height: 28px; }
.sample.normal { font-family: "Liberation Serif", serif; font-size: 15px; }
.sample.h1 { font-family: "Liberation Serif", serif; font-size: 28px; font-weight: bold; }
.sample.h2 { font-family: "Liberation Sans", sans-serif; font-size: 20px; }
.sample.h3 { font-family: "Liberation Serif", serif; font-size: 21px; font-weight: bold; }
.spin { display: flex; flex-direction: column; flex: 1; border-left: 1px solid #e4e6ea; }
.spin button { display: flex; flex: 1; align-items: center; justify-content: center; border-bottom: 1px solid #e4e6ea; }
.spin button:last-child { border: 0; }
.typeset { width: 79px; padding-left: 10px; }
.edit { display: flex; gap: 11px; width: 122px; padding-left: 10px; }

/* workspace */
.workspace { display: flex; flex: 1; min-height: 0; }
.rail { display: flex; flex-direction: column; align-items: center; flex: none; fill: none; stroke: #333b50; }
.rail button { display: flex; align-items: center; justify-content: center; width: 32px; height: 32px; margin-bottom: 4px; border-radius: 2px; flex: none; }
.rail button.on { background: #d9dee5; }
.rail.left { width: 43px; padding: 2px 1px 0 0; border-right: 1px solid #e0e3e9; }
.rail.right { width: 44px; border-left: 2px solid #dfe2ea; padding: 11px 1px 0 0; }
.grip { width: 20px; height: 4px; margin-bottom: 13px; border: solid #c9cdd5; border-width: 1px 0; }
.rail-line { width: 38px; height: 1px; margin-top: auto; background: #dfe2ea; }
.rail .dots { margin: 9px 0 1px; }

.outline-panel { display: flex; flex-direction: column; width: 268px; padding: 0 5px 0 3px; border-right: 1px solid #dfe2e8; flex: none; }
.panel-head { display: flex; align-items: center; justify-content: space-between; height: 30px; padding: 0 10px 0 11px; }
.panel-head h2 { margin: 0; font-size: 18px; line-height: 24px; font-weight: normal; }
.panel-tools { display: flex; align-items: center; gap: 11px; height: 24px; padding: 0 4px 0 5px; margin-bottom: 6px; }
.sq { width: 13px; height: 13px; fill: none; stroke: #777c88; }
.sq.off { stroke: #c2c5cc; }
.smart { display: flex; align-items: center; gap: 5px; margin-left: auto; }
.tree { flex: 1; margin: 0; padding: 6px 0 0; list-style: none; border: 1px solid #dfe2e8; border-radius: 3px; }
.tree li { display: flex; align-items: center; height: 22px; gap: 5px; }
.tw { width: 10px; height: 6px; }
.l1 { padding-left: 12px; }
.l2 { padding-left: 28px; }
.l3 { padding-left: 59px; }

.editor { display: flex; flex-direction: column; flex: 1; min-width: 0; }
.hruler-strip { display: flex; height: 25px; flex: none; }
.corner { width: 29px; padding: 12px 0 0 7px; flex: none; }
.hruler { position: relative; width: 714px; margin: 0 auto; padding-left: 6px; height: 25px; background: linear-gradient(#e8ebf1, #e8ebf1) 106px 0 / 500px 16px no-repeat; }
.hnums { display: grid; grid-template-columns: repeat(24, 1fr); width: 690px; text-align: center; font-size: 10px; line-height: 16px; color: #46546f; }
.indent-left { position: absolute; left: 103px; top: 0; }
.indent-right { position: absolute; left: 601px; top: 0; }
.canvas { display: flex; flex: 1; min-height: 0; overflow: hidden; }
.vcol { width: 29px; padding-left: 3px; flex: none; }
.vruler { width: 16px; padding-top: 10px; background: linear-gradient(#e8ebf1, #e8ebf1) 0 0 / 16px 700px no-repeat; }
.vruler span { display: flex; align-items: center; justify-content: center; width: 16px; height: 20px; margin-bottom: 19px; background: linear-gradient(#8b96ad, #8b96ad) 0 0 / 10px 1px no-repeat, linear-gradient(#8b96ad, #8b96ad) 0 100% / 10px 1px no-repeat; writing-mode: vertical-rl; transform: rotate(180deg); font-size: 10px; line-height: 16px; color: #46546f; }
.pages { position: relative; flex: 1; display: flex; flex-direction: column; align-items: center; gap: 17px; background: linear-gradient(#dcdee0, #dcdee0) center 787px / 714px 17px no-repeat; }
.page { position: relative; width: 714px; height: 787px; flex: none; padding: 0 107px 0 106px; background: #fff; box-shadow: 0 0 16px rgba(60, 66, 76, .28); clip-path: inset(0 -16px -17px); color: #000; font-family: "Liberation Serif", "Noto Sans CJK SC", serif; font-size: 14px; }
.page.next { height: 60px; }
.ret { display: inline-block; width: 7px; height: 8px; }
.toc { display: flex; align-items: center; height: 19px; line-height: 19px; }
.toc.sub { margin-top: -7px; height: 20px; padding-left: 58px; }
.toc.tbl { height: 18px; }
.lab { display: flex; gap: 3px; width: 39px; }
.sub .lab { width: 55px; }
.lab i, .caption i, .footnote i { color: #888; }
.leader { flex: 1; display: flex; justify-content: center; height: 10px; margin-top: 1px; border-bottom: 1px dotted #222; }
.leader svg { width: 7px; height: 7px; margin-top: 1px; }
.toc b { font-weight: normal; padding-left: 1px; }
.toc .ret { margin-right: -7px; }
.blank { display: flex; align-items: center; height: 16px; }
.caret-line { height: 13px; padding: 4px 0 0; }
.caret-line::before { content: ""; width: 2px; height: 16px; flex: none; background: #000; }
.blank.tall { height: 20px; }
.text { margin: 0; }
.line { display: block; height: 28px; line-height: 28px; white-space: nowrap; text-align: justify; text-align-last: justify; }
.line.indent { padding-left: 27px; }
.line.last { text-align-last: left; padding-left: 0; }
.line em { font-style: normal; color: #f00; }
.line .ret { margin-left: 4px; }
.line sup, .footnote sup { font-size: 8px; line-height: 8px; color: #888; }
.box { display: inline-block; width: 11px; height: 13px; border: 1px solid #b5b3a0; vertical-align: -2px; }
.chart { width: 467px; height: 233px; margin: 24px 0 0 22px; font-family: "Noto Sans CJK SC", sans-serif; font-size: 10px; fill: #595959; }
.frame, .grid { fill: none; stroke: #d9d9d9; }
.title { font-size: 16px; text-anchor: middle; }
.axis { text-anchor: end; }
.cats { text-anchor: middle; }
.legend { font-size: 11px; }
.gold { fill: #ffc000; }
.blue { fill: #5b9bd5; }
.caption { height: 26px; line-height: 26px; text-align: center; font-size: 12px; }
.footnote { margin-top: 36px; padding-top: 5px; height: 21px; line-height: 18px; font-size: 11px; background: linear-gradient(#000, #000) 0 0 / 174px 1px no-repeat; }
.page-foot { position: relative; height: 42px; text-align: center; font-size: 11px; color: #777; line-height: 42px; }
.page-foot .ret { position: absolute; left: 0; top: 17px; }
.mark { position: absolute; top: 0; width: 21px; height: 21px; border: solid #c4c4c4; border-width: 1px 0 0; }
.ml { left: -21px; border-right-width: 1px; }
.mr { right: -21px; border-left-width: 1px; }
.red-arrow { position: absolute; left: calc(50% - 374px); top: 184px; filter: drop-shadow(2px 4px 2px rgba(0, 0, 0, .5)); }
.side-card { position: absolute; left: calc(50% + 376px); top: 20px; display: flex; flex-direction: column; gap: 9px; }
.eject { width: 24px; height: 24px; display: flex; align-items: center; justify-content: center; background: #f5f5f5; border-radius: 3px; box-shadow: 0 0 4px rgba(0, 0, 0, .18); }
.check { display: flex; width: 100px; height: 32px; align-items: center; gap: 6px; background: #fff; border-radius: 4px; box-shadow: 0 1px 6px rgba(0, 0, 0, .2); color: #000; }
.badge { display: flex; align-items: center; justify-content: center; width: 31px; height: 32px; background: #8c8cff; border-radius: 4px 0 0 4px; }
.ibeam { position: absolute; left: calc(50% + 362px); top: 273px; }

.scrollbar { display: flex; flex-direction: column; width: 14px; flex: none; }
.ruler-toggle { margin: 4px 0 2px 2px; }
.track { flex: 1; display: flex; flex-direction: column; align-items: center; padding-top: 8px; background: #e8eaf0; }
.thumb { width: 12px; height: 45px; margin-top: 87px; border-radius: 6px; background: #d3d6dd; }
.steps { display: flex; flex-direction: column; align-items: center; gap: 12px; margin-top: auto; padding-bottom: 7px; }

/* status bar */
.status { display: flex; align-items: center; height: 28px; padding: 0 14px 0 9px; border-top: 1px solid #dfe2e8; background: #f5f7f9; flex: none; white-space: nowrap; fill: none; stroke: #333b50; }
.status .vsep { height: 14px; }
.page-no { width: 62px; }
.words { padding-left: 9px; width: 73px; }
.st { display: flex; align-items: center; gap: 3px; padding-left: 9px; }
.st.spell { height: 24px; margin-left: 10px; padding: 0 3px 0 4px; background: #e7f0fb; }
.st + .caret { margin: 0 5px 0 2px; }
.st + .caret + .vsep + .st { padding-left: 3px; }
.st + .caret + .vsep + .st.missing { padding-left: 19px; }
.st:not(.spell) + .caret { margin-left: 4px; }
.views { display: flex; align-items: center; gap: 2px; margin-left: auto; }
.v { display: flex; align-items: center; justify-content: center; width: 24px; height: 24px; border-radius: 2px; }
.v.on { background: #dadfe6; }
.views .vsep { margin: 0 8px 0 6px; }
.fit { margin: 0 5px; }
.zoom { width: 27px; }
.step { display: flex; margin: 0 10px; }
.slider { appearance: none; width: 138px; height: 16px; margin: 0; background: linear-gradient(#46546f, #46546f) 0 50% / 61px 1px no-repeat, linear-gradient(#c5c9d0, #c5c9d0) 0 50% / 100% 1px no-repeat; }
.slider::-webkit-slider-thumb { appearance: none; width: 12px; height: 12px; border: 1px solid #46546f; border-radius: 50%; background: #f5f7f9; }

/* overlays */
.ime { position: fixed; z-index: 3; right: 108px; bottom: 57px; display: flex; align-items: center; justify-content: center; gap: 4px; width: 61px; height: 26px; background: #fff; border: 1px solid #999; border-radius: 6px; box-shadow: 0 1px 3px rgba(0, 0, 0, .6); }
.watermark { position: fixed; z-index: 4; right: 10px; bottom: 8px; display: flex; opacity: .85; pointer-events: none; }
.watermark div { display: flex; flex-direction: column; width: 106px; }
.watermark strong { font-size: 21px; line-height: 23px; color: #4b96d8; }
.watermark span { font: bold 16px/18px "Liberation Sans", sans-serif; color: #4fb96e; }
```
